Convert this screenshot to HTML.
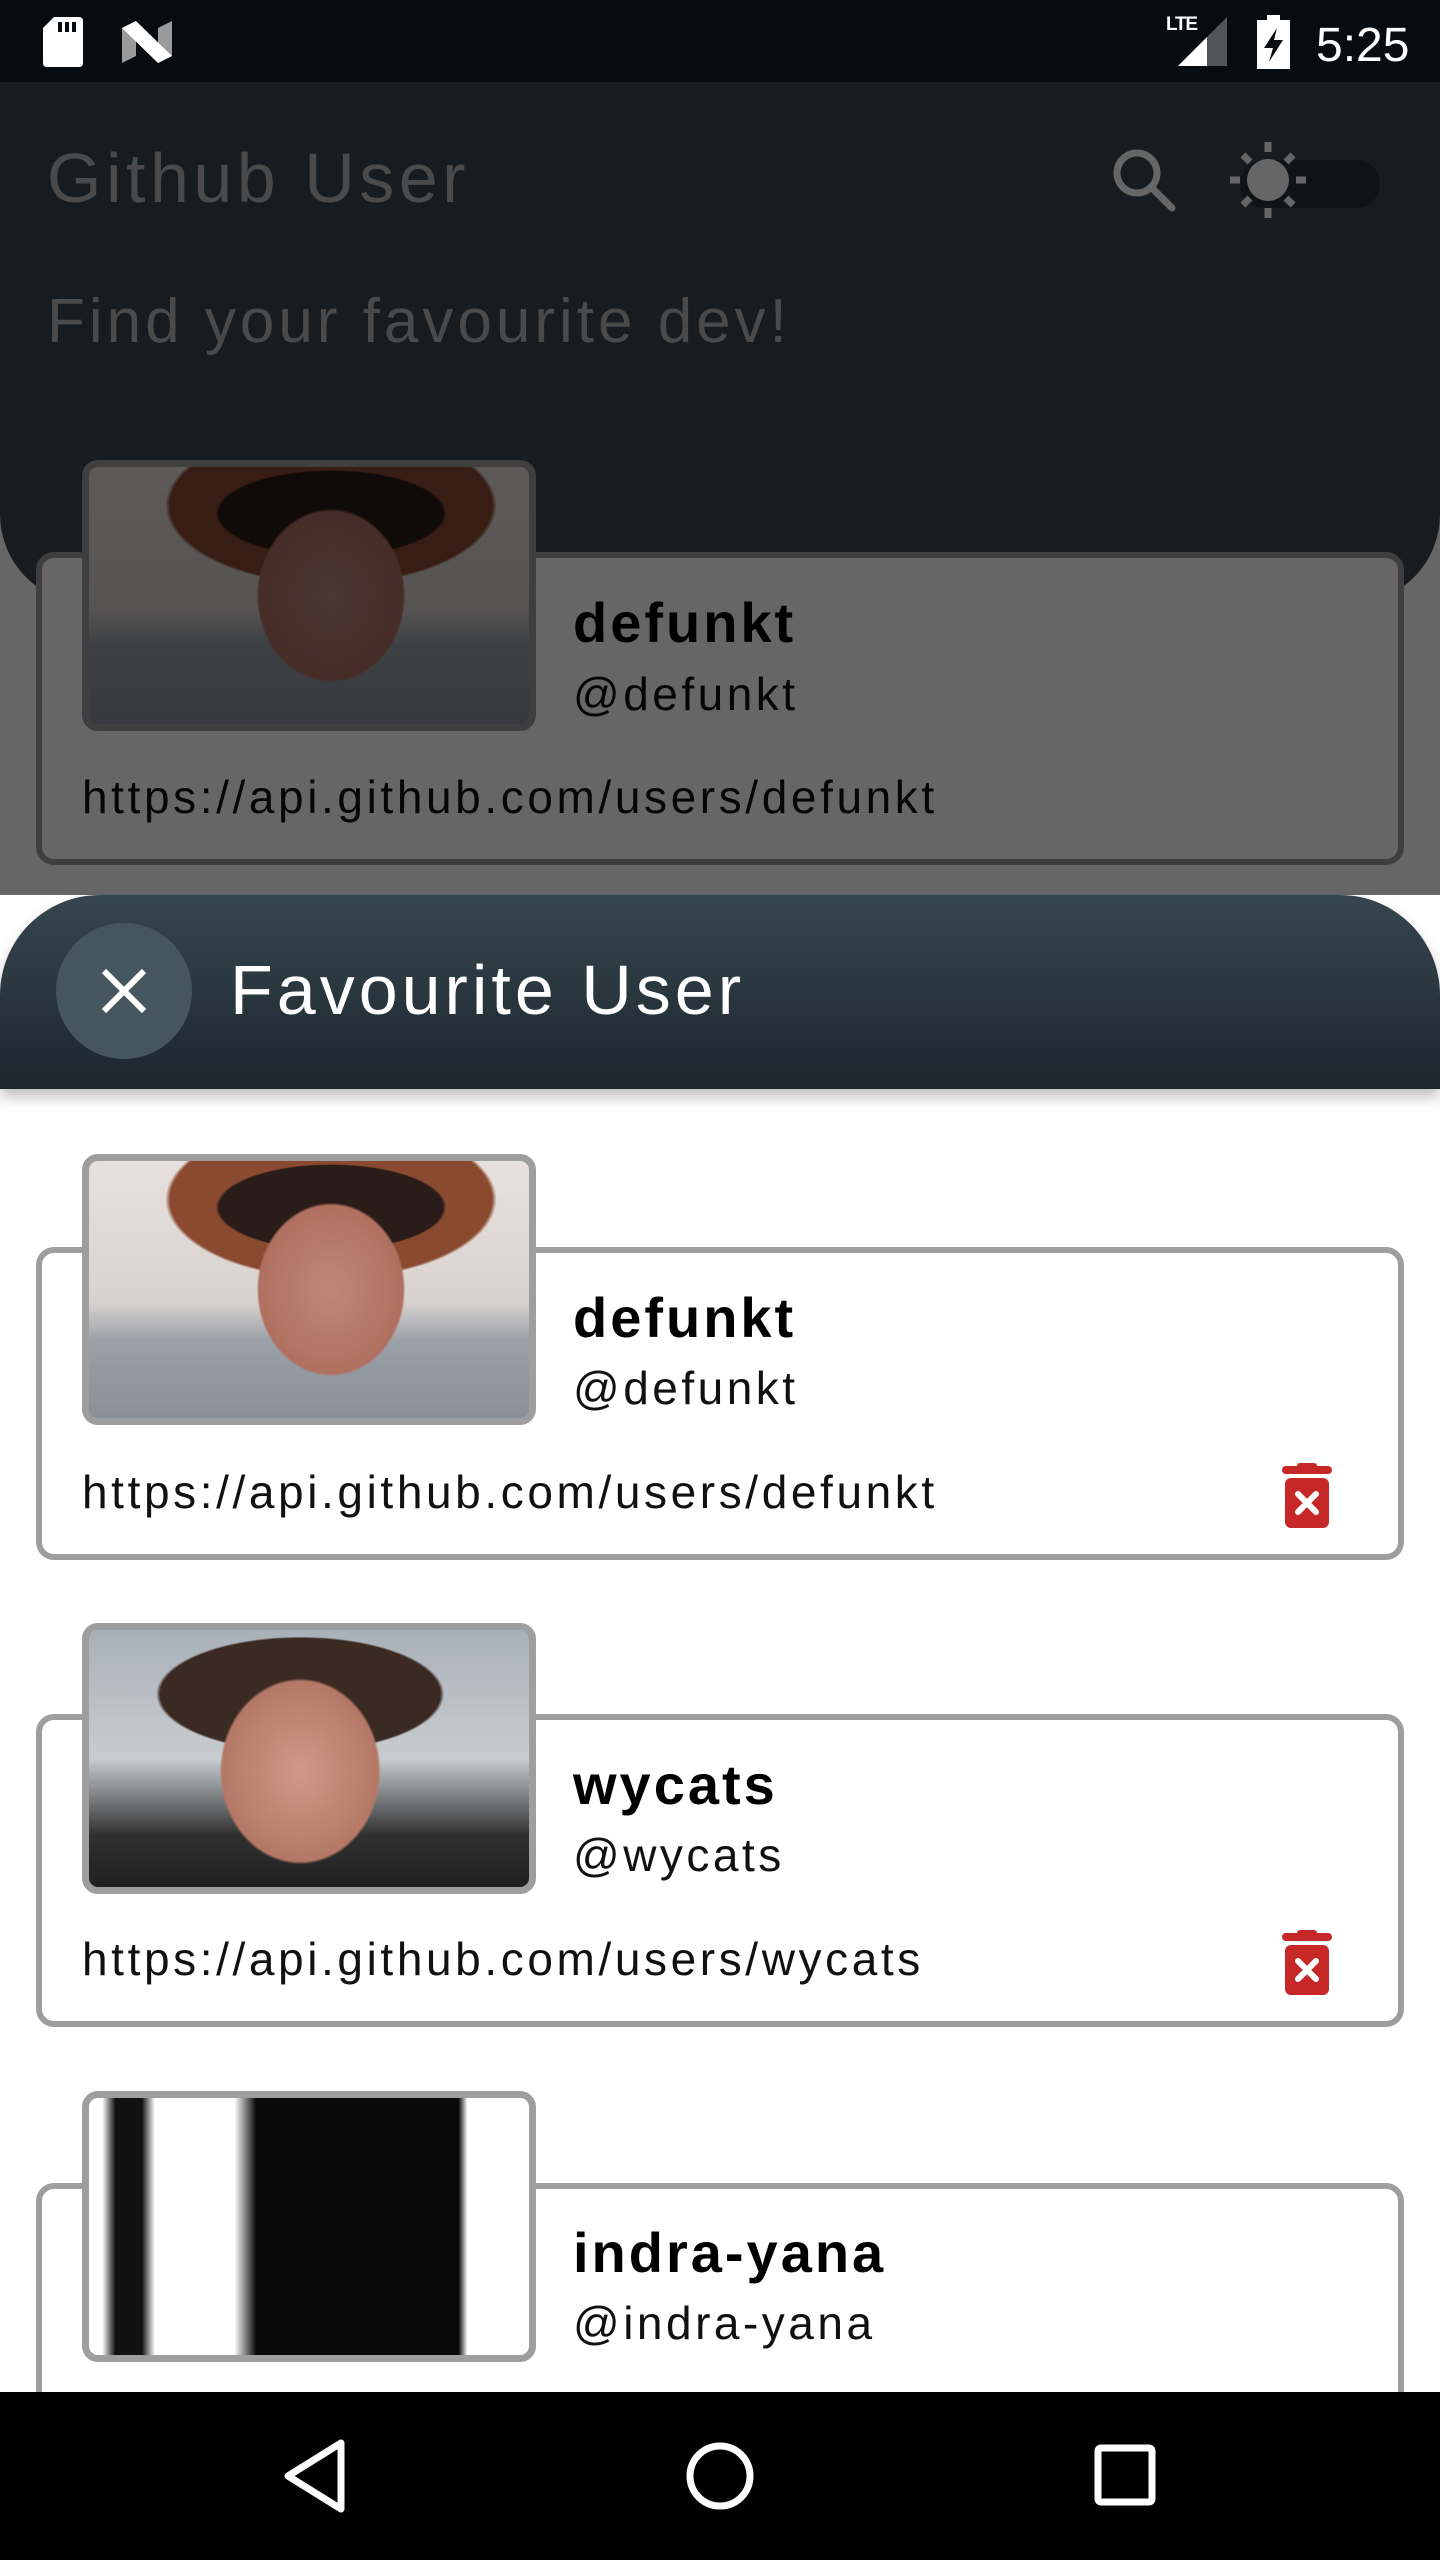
<!DOCTYPE html>
<html><head><meta charset="utf-8">
<style>
*{margin:0;padding:0;box-sizing:border-box}
body{width:1440px;height:2560px;position:relative;overflow:hidden;background:#fff;font-family:"Liberation Sans",sans-serif}
.abs{position:absolute}
.card{position:absolute;left:36px;width:1368px;height:313px;border:6px solid #9e9e9e;border-radius:18px;background:#fff}
.img{position:absolute;left:82px;width:454px;height:271px;border:7px solid #9e9e9e;border-radius:16px;overflow:hidden;background:#fff}
.name{position:absolute;left:573px;font-size:56px;font-weight:bold;color:#000;letter-spacing:3px}
.handle{position:absolute;left:573px;font-size:46px;color:#111;letter-spacing:3.5px}
.url{position:absolute;left:82px;font-size:46px;color:#111;letter-spacing:3.6px}
.p1{background:radial-gradient(ellipse 120px 140px at 55% 50%,#c08878 0%,#b07060 60%,transparent 62%),radial-gradient(ellipse 160px 60px at 55% 18%,#2a1c18 0,#2a1c18 70%,transparent 72%),radial-gradient(ellipse 230px 110px at 55% 15%,#8a4a30 0,#8a4a30 70%,transparent 72%),linear-gradient(180deg,#e8e0dc 0%,#d8d2d0 55%,#9aa0a8 70%,#8a9098 100%)}
.p2{background:radial-gradient(ellipse 130px 150px at 48% 55%,#d09a88 0%,#b57866 60%,transparent 62%),radial-gradient(ellipse 200px 80px at 48% 25%,#3a2a22 0,#3a2a22 70%,transparent 72%),linear-gradient(180deg,#a8b0b8 0%,#c8ccd0 50%,#303030 80%,#202020 100%)}
.p3{background:linear-gradient(90deg,#fff 0%,#fff 3%,#111 6%,#111 12%,#fff 15%,#fff 33%,#0a0a0a 38%,#0a0a0a 84%,#fff 86%)}
.trash{position:absolute;left:1282px}
</style></head><body>

<div class="abs" style="left:0;top:0;width:1440px;height:895px;background:#fff"></div>
<div class="abs" style="left:0;top:82px;width:1440px;height:522px;background:#37474f;border-radius:0 0 90px 90px"></div>
<div class="abs" style="left:47px;top:138px;font-size:70px;color:#b8b8b8;letter-spacing:4.5px">Github User</div>
<div class="abs" style="left:47px;top:286px;font-size:62px;color:#b8b8b8;letter-spacing:4px">Find your favourite dev!</div>
<svg class="abs" style="left:1100px;top:130px" width="300" height="100" viewBox="1100 130 300 100">
<circle cx="1137" cy="173" r="20" fill="none" stroke="#ffffff" stroke-width="7"/>
<line x1="1152" y1="188" x2="1172" y2="208" stroke="#fff" stroke-width="7" stroke-linecap="round"/>
<rect x="1240" y="160" width="140" height="48" rx="24" fill="#263238"/>
<circle cx="1268" cy="180" r="21" fill="#fff"/>
<g stroke="#fff" stroke-width="7"><line x1="1268" y1="142" x2="1268" y2="152"/><line x1="1268" y1="208" x2="1268" y2="218"/><line x1="1230" y1="180" x2="1240" y2="180"/><line x1="1296" y1="180" x2="1306" y2="180"/><line x1="1243" y1="155" x2="1250" y2="162"/><line x1="1286" y1="198" x2="1293" y2="205"/><line x1="1293" y1="155" x2="1286" y2="162"/><line x1="1250" y1="198" x2="1243" y2="205"/></g>
</svg>
<div class="card" style="top:552px"></div>
<div class="img p1" style="top:460px"></div>
<div class="name" style="top:590px">defunkt</div>
<div class="handle" style="top:667px">@defunkt</div>
<div class="url" style="top:770px">https://api.github.com/users/defunkt</div>
<div class="abs" style="left:0;top:82px;width:1440px;height:813px;background:rgba(0,0,0,0.6)"></div>

<div class="abs" style="left:0;top:0;width:1440px;height:82px;background:#060c10"></div>
<svg class="abs" style="left:0;top:0" width="1440" height="82">
<path d="M54 17H79Q83 17 83 21V63Q83 67 79 67H47Q43 67 43 63V28Z" fill="#fff"/>
<rect x="58" y="22" width="4" height="10" fill="#060c10"/><rect x="65" y="22" width="4" height="10" fill="#060c10"/><rect x="72" y="22" width="4" height="10" fill="#060c10"/>
<path d="M122 28L136 21V56L122 63Z" fill="#9a9a9a"/><path d="M158 28L172 21V56L158 63Z" fill="#9a9a9a"/>
<path d="M122 28L136 21L172 56L158 63Z" fill="#fff"/>
<path d="M1178 66L1227 17V66Z" fill="#50555a"/><path d="M1178 66L1207 37V66Z" fill="#fff"/>
<text x="1166" y="30" font-family="Liberation Sans" font-weight="bold" font-size="19" fill="#fff" textLength="32">LTE</text>
<rect x="1257" y="20" width="33" height="49" fill="#fff"/><rect x="1267" y="15" width="13" height="6" fill="#fff"/>
<path d="M1277 28L1264 48H1273L1269 62L1283 40H1274Z" fill="#060c10"/>
<text x="1316" y="61" font-family="Liberation Sans" font-size="48" fill="#fff">5:25</text>
</svg>

<div class="abs" style="left:0;top:895px;width:1440px;height:194px;border-radius:100px 100px 0 0;background:linear-gradient(180deg,#37474f 0%,#1b262d 100%);box-shadow:0 8px 14px rgba(0,0,0,0.25)"></div>
<div class="abs" style="left:56px;top:923px;width:136px;height:136px;border-radius:50%;background:#46565e"></div>
<svg class="abs" style="left:100px;top:967px" width="48" height="48"><path d="M4 4L44 44M44 4L4 44" stroke="#fff" stroke-width="6"/></svg>
<div class="abs" style="left:230px;top:950px;font-size:70px;color:#fff;letter-spacing:4px">Favourite User</div>

<div class="card" style="top:1247px"></div>
<div class="img p1" style="top:1154px"></div>
<div class="name" style="top:1285px">defunkt</div>
<div class="handle" style="top:1361px">@defunkt</div>
<div class="url" style="top:1465px">https://api.github.com/users/defunkt</div>
<svg class="trash" style="top:1462px" width="50" height="70"><rect x="15" y="1" width="20" height="6" rx="3" fill="#c62828"/><rect x="0" y="4" width="50" height="8" rx="4" fill="#c62828"/><rect x="3" y="16" width="44" height="50" rx="6" fill="#c62828"/><path d="M16 32L34 50M34 32L16 50" stroke="#fff" stroke-width="6" stroke-linecap="round"/></svg>

<div class="card" style="top:1714px"></div>
<div class="img p2" style="top:1623px"></div>
<div class="name" style="top:1752px">wycats</div>
<div class="handle" style="top:1828px">@wycats</div>
<div class="url" style="top:1932px">https://api.github.com/users/wycats</div>
<svg class="trash" style="top:1929px" width="50" height="70"><rect x="15" y="1" width="20" height="6" rx="3" fill="#c62828"/><rect x="0" y="4" width="50" height="8" rx="4" fill="#c62828"/><rect x="3" y="16" width="44" height="50" rx="6" fill="#c62828"/><path d="M16 32L34 50M34 32L16 50" stroke="#fff" stroke-width="6" stroke-linecap="round"/></svg>

<div class="card" style="top:2183px"></div>
<div class="img p3" style="top:2091px"></div>
<div class="name" style="top:2220px">indra-yana</div>
<div class="handle" style="top:2296px">@indra-yana</div>

<div class="abs" style="left:0;top:2392px;width:1440px;height:168px;background:#000"></div>
<svg class="abs" style="left:0;top:2392px" width="1440" height="168">
<path d="M341 51L288 84L341 117Z" fill="none" stroke="#fff" stroke-width="7" stroke-linejoin="round"/>
<circle cx="720" cy="84" r="30" fill="none" stroke="#fff" stroke-width="7"/>
<rect x="1098" y="56" width="54" height="54" rx="3" fill="none" stroke="#fff" stroke-width="7"/>
</svg>
</body></html>
